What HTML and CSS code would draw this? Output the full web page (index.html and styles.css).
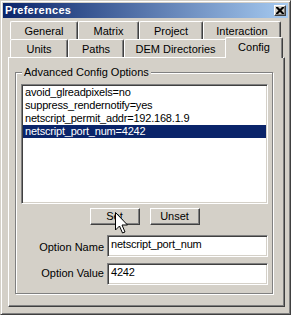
FILE: index.html
```html
<!DOCTYPE html>
<html>
<head>
<meta charset="utf-8">
<link rel="stylesheet" href="styles.css">
</head>
<body>
<div class="window">
  <div class="titlebar">
    <span class="title">Preferences</span>
    <span class="close"><svg width="8" height="7" viewBox="0 0 8 7"><path d="M0 0h2l2 2 2-2h2v1l-2.5 2.5L8 6v1H6L4 5 2 7H0V6l2.5-2.5L0 1z" fill="#000"/></svg></span>
  </div>
  <div class="client">
    <div class="tabrow">
      <div class="tab t-general">General</div>
      <div class="tab t-matrix">Matrix</div>
      <div class="tab t-project">Project</div>
      <div class="tab t-interaction">Interaction</div>
    </div>
    <div class="tabrow">
      <div class="tab t-units">Units</div>
      <div class="tab t-paths">Paths</div>
      <div class="tab t-dem">DEM Directories</div>
      <div class="tab t-config active">Config</div>
    </div>
    <div class="panel">
      <fieldset class="group">
        <legend>Advanced Config Options</legend>
        <div class="listbox">
          <div class="item">avoid_glreadpixels=no</div>
          <div class="item">suppress_rendernotify=yes</div>
          <div class="item">netscript_permit_addr=192.168.1.9</div>
          <div class="item sel">netscript_port_num=4242</div>
        </div>
        <div class="buttons">
          <div class="btn">Set</div>
          <div class="btn">Unset</div>
        </div>
        <div class="field f-name">
          <span class="lbl">Option Name</span>
          <div class="edit">netscript_port_num</div>
        </div>
        <div class="field f-value">
          <span class="lbl">Option Value</span>
          <div class="edit">4242</div>
        </div>
      </fieldset>
    </div>
  </div>
  <svg class="cursor" width="13" height="22" viewBox="0 0 13 22"><path d="M0.5 0.5V18L4.5 14L7.5 21L10 20L7 13H12.5Z" fill="#fff" stroke="#000" stroke-width="1" stroke-linejoin="miter"/></svg>
</div>
</body>
</html>
```
FILE: styles.css
```css
html, body {
  margin: 0;
  padding: 0;
  background: #d4d0c8;
}
body {
  font-family: "Liberation Sans", Arial, sans-serif;
  font-size: 11px;
  line-height: 13px;
  color: #000;
}
.window {
  position: relative;
  width: 291px;
  height: 315px;
  box-sizing: border-box;
  border: 1px solid;
  border-color: #d4d0c8 #404040 #404040 #d4d0c8;
  box-shadow: inset 1px 1px #fff, inset -1px -1px #808080;
  padding: 2px;
  background: #d4d0c8;
}
.titlebar {
  height: 15px;
  display: flex;
  align-items: center;
  justify-content: space-between;
  padding: 0 2px 0 2px;
  background: linear-gradient(to right, #0a246a, #a6caf0);
}
.title {
  color: #fff;
  font-weight: bold;
  font-size: 11px;
  letter-spacing: 0.3px;
  line-height: 15px;
}
.close {
  width: 12px;
  height: 11px;
  box-sizing: border-box;
  background: #d4d0c8;
  border: 1px solid;
  border-color: #fff #404040 #404040 #fff;
  box-shadow: inset -1px -1px #808080;
  display: flex;
  align-items: center;
  justify-content: center;
}
.close svg { display: block; margin: 0 1px 1px 0; }
.client {
  padding: 3px 3px 0 5px;
}
.tabrow {
  display: flex;
  height: 18px;
  padding-left: 2px;
}
.tab {
  box-sizing: border-box;
  height: 18px;
  border-top: 1px solid #fff;
  border-left: 1px solid #fff;
  border-right: 1px solid #404040;
  border-radius: 2px 2px 0 0;
  box-shadow: inset -1px 0 #808080;
  background: #d4d0c8;
  text-align: center;
  padding-top: 3px;
  white-space: nowrap;
}
.t-general { width: 68px; }
.t-matrix { width: 61px; }
.t-project { width: 64px; }
.t-interaction { width: 78px; }
.t-units { width: 58px; }
.t-paths { width: 56px; }
.t-dem { width: 103px; }
.t-config { width: 54px; }
.tab.active {
  position: relative;
  z-index: 2;
  width: 58px;
  height: 21px;
  margin: -2px -2px -1px -2px;
  padding-top: 3px;
}
.panel {
  position: relative;
  z-index: 1;
  box-sizing: border-box;
  height: 250px;
  border-top: 1px solid #fff;
  border-left: 1px solid #fff;
  border-right: 1px solid #404040;
  border-bottom: 1px solid #404040;
  box-shadow: inset -1px -1px #808080;
  padding: 8px 0 0 6px;
}
.group {
  box-sizing: border-box;
  width: 258px;
  margin: 0;
  min-width: 0;
  border: 1px solid #808080;
  box-shadow: 1px 1px 0 #fff, inset 1px 1px 0 #fff;
  padding: 5px 4px 8px 5px;
}
.group legend {
  padding: 0 2px;
  margin-left: 1px;
  background: #d4d0c8;
  line-height: 13px;
}
.listbox {
  box-sizing: border-box;
  height: 120px;
  background: #fff;
  border: 1px solid;
  border-color: #808080 #fff #fff #808080;
  box-shadow: inset 1px 1px #404040, inset -1px -1px #d4d0c8;
  padding: 1px;
}
.item {
  height: 13px;
  line-height: 13px;
  padding-left: 2px;
  white-space: nowrap;
  letter-spacing: -0.2px;
}
.item.sel {
  background: #0a246a;
  color: #fff;
}
.buttons {
  display: flex;
  justify-content: center;
  gap: 10px;
  margin-top: 4px;
}
.btn {
  box-sizing: border-box;
  width: 50px;
  height: 17px;
  border: 1px solid;
  border-color: #fff #404040 #404040 #fff;
  box-shadow: inset -1px -1px #808080;
  text-align: center;
  line-height: 15px;
}
.field {
  display: grid;
  grid-template-columns: 83px 161px;
  column-gap: 3px;
}
.f-name { margin-top: 10px; }
.f-value { margin-top: 6px; }
.lbl {
  text-align: right;
  white-space: nowrap;
}
.f-name .lbl { padding-top: 6px; }
.f-value .lbl { padding-top: 4px; }
.edit {
  box-sizing: border-box;
  height: 22px;
  background: #fff;
  border: 1px solid;
  border-color: #808080 #fff #fff #808080;
  box-shadow: inset 1px 1px #404040, inset -1px -1px #d4d0c8;
  padding: 2px 3px;
  white-space: nowrap;
  letter-spacing: -0.2px;
}
.cursor {
  position: absolute;
  left: 114px;
  top: 211px;
  z-index: 5;
}
```
